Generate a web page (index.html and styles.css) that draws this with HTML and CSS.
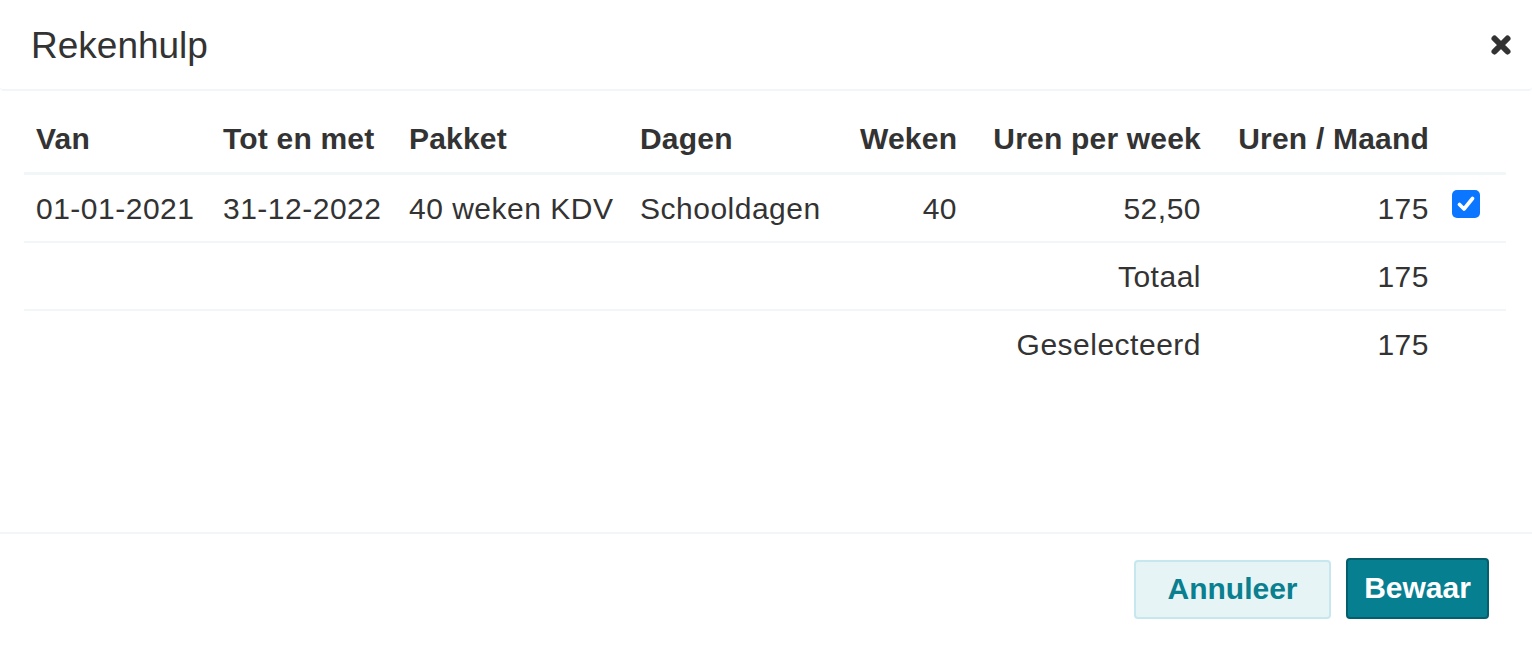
FILE: index.html
```html
<!DOCTYPE html>
<html lang="nl">
<head>
<meta charset="utf-8">
<title>Rekenhulp</title>
<link rel="stylesheet" href="styles.css">
</head>
<body>
<div class="modal">
  <div class="modal-header">
    <h4 class="modal-title">Rekenhulp</h4>
    <button class="close" aria-label="Sluiten">
      <svg width="22" height="22" viewBox="0 0 22 22"><path d="M4.5 4.5 L17.5 17.5 M17.5 4.5 L4.5 17.5" stroke="#333" stroke-width="6" stroke-linecap="round"/></svg>
    </button>
  </div>
  <div class="modal-body">
    <table class="calc">
      <colgroup>
        <col class="c-van"><col class="c-tot"><col class="c-pakket"><col class="c-dagen"><col class="c-weken"><col class="c-upw"><col class="c-upm"><col class="c-chk">
      </colgroup>
      <thead>
        <tr>
          <th>Van</th>
          <th>Tot en met</th>
          <th>Pakket</th>
          <th>Dagen</th>
          <th class="num">Weken</th>
          <th class="num">Uren per week</th>
          <th class="num">Uren / Maand</th>
          <th></th>
        </tr>
      </thead>
      <tbody>
        <tr>
          <td>01-01-2021</td>
          <td>31-12-2022</td>
          <td>40 weken KDV</td>
          <td>Schooldagen</td>
          <td class="num">40</td>
          <td class="num">52,50</td>
          <td class="num">175</td>
          <td class="chk-cell"><span class="checkbox"><svg width="18" height="16" viewBox="0 0 18 16"><path d="M2.5 8.5 L7 13 L15.5 2.5" fill="none" stroke="#fff" stroke-width="3.6" stroke-linecap="round" stroke-linejoin="round"/></svg></span></td>
        </tr>
        <tr>
          <td colspan="5"></td>
          <td class="num">Totaal</td>
          <td class="num">175</td>
          <td></td>
        </tr>
        <tr class="last">
          <td colspan="5"></td>
          <td class="num">Geselecteerd</td>
          <td class="num">175</td>
          <td></td>
        </tr>
      </tbody>
    </table>
  </div>
  <div class="modal-footer">
    <button class="btn btn-light">Annuleer</button>
    <button class="btn btn-primary">Bewaar</button>
  </div>
</div>
</body>
</html>
```
FILE: styles.css
```css
html, body {
  margin: 0;
  padding: 0;
  background: #fff;
}
body {
  font-family: "Liberation Sans", Arial, Helvetica, sans-serif;
  color: #333;
}
.modal {
  width: 1532px;
  height: 652px;
  display: flex;
  flex-direction: column;
  background: #fff;
}
.modal-header {
  display: flex;
  align-items: center;
  justify-content: space-between;
  height: 91px;
  box-sizing: border-box;
  padding: 0 20px 0 31px;
  border-bottom: 2px solid #f1f6f9;
  border-radius: 0 0 4px 4px;
}
.modal-title {
  margin: 0;
  font-size: 37px;
  font-weight: normal;
  line-height: 40px;
  padding-top: 3px;
}
.close {
  background: none;
  border: 0;
  padding: 0;
  display: flex;
  cursor: pointer;
}
.modal-body {
  height: 443px;
  box-sizing: border-box;
  padding: 14px 26px 0 24px;
  border-bottom: 2px solid #f1f6f9;
}
.calc {
  width: 1482px;
  border-collapse: collapse;
  table-layout: fixed;
  font-size: 30px;
}
.c-van { width: 187px; }
.c-tot { width: 186px; }
.c-pakket { width: 231px; }
.c-dagen { width: 220px; }
.c-weken { width: 121px; }
.c-upw { width: 244px; }
.c-upm { width: 228px; }
.c-chk { width: 65px; }
.calc th, .calc td {
  padding: 14px 12px 13px;
  line-height: 40px;
  text-align: left;
  white-space: nowrap;
  vertical-align: top;
}
.calc th {
  font-weight: bold;
  letter-spacing: 0.2px;
  border-bottom: 3px solid #f1f6f9;
  padding-bottom: 13px;
}
.calc td {
  letter-spacing: 0.5px;
  border-bottom: 2px solid #f1f6f9;
  padding-bottom: 12px;
}
.calc tr.last td {
  border-bottom: 0;
}
.calc .num {
  text-align: right;
}
.chk-cell {
  padding-left: 11px !important;
}
.checkbox {
  display: flex;
  align-items: center;
  justify-content: center;
  width: 28px;
  height: 28px;
  margin-top: 1px;
  background: #0b76ff;
  border-radius: 5px;
}
.modal-footer {
  flex: 1;
  display: flex;
  justify-content: flex-end;
  align-items: flex-end;
  gap: 15px;
  padding: 0 43px 33px 0;
}
.btn {
  font-family: "Liberation Sans", Arial, Helvetica, sans-serif;
  font-weight: bold;
  font-size: 30px;
  line-height: 34px;
  border-radius: 4px;
  box-sizing: border-box;
  padding: 0 0 2px;
  cursor: pointer;
}
.btn-light {
  width: 197px;
  height: 59px;
  background: #e6f4f6;
  border: 2px solid #c6e7ee;
  color: #0a7f8f;
}
.btn-primary {
  width: 143px;
  height: 61px;
  background: #067f91;
  border: 2px solid #055e6b;
  color: #fff;
}
```
